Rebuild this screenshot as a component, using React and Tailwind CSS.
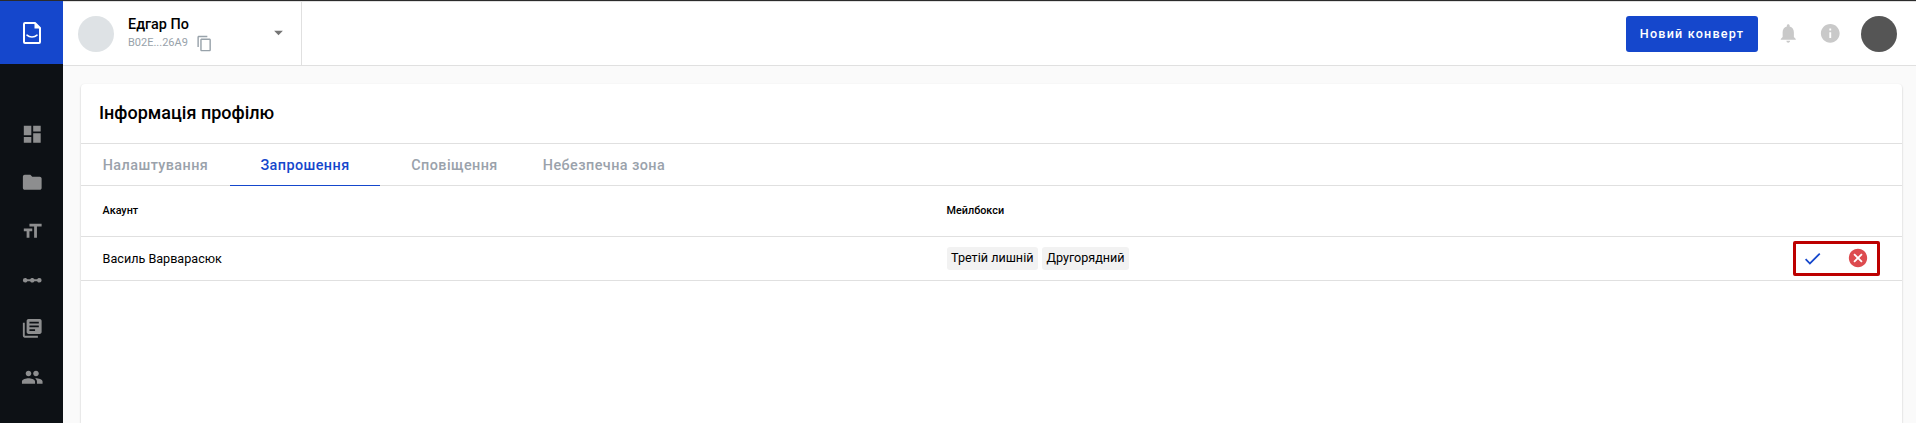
import {
  MdDashboard, MdFolder, MdFormatSize, MdLinearScale, MdLibraryBooks, MdPeople,
  MdNotifications, MdInfo, MdCancel, MdCheck, MdContentCopy, MdArrowDropDown,
} from "react-icons/md";

const navItems = [MdDashboard, MdFolder, MdFormatSize, MdLinearScale, MdLibraryBooks, MdPeople];

function Logo() {
  return (
    <svg width="20" height="24" viewBox="0 0 20 24" fill="none" stroke="#fff" strokeWidth="2" className="ml-px">
      <path d="M3 2h10l5 5v14a1 1 0 0 1-1 1H3a1 1 0 0 1-1-1V3a1 1 0 0 1 1-1z" strokeLinejoin="round" />
      <path d="M12.500 2v5.500H18z" fill="#fff" stroke="none" />
      <path d="M5 14.200c2.600 2.300 7.400 2.300 10 0" strokeWidth="1.600" strokeLinecap="round" />
    </svg>
  );
}

function Sidebar() {
  return (
    <aside className="flex w-[63px] shrink-0 flex-col bg-[#0d1115]">
      <div className="flex h-[63px] items-center justify-center bg-[#1547cc]">
        <Logo />
      </div>
      <nav className="flex flex-col items-center gap-[26.2px] pt-[58.5px] pl-[2px] text-[#8d8e8f]">
        {navItems.map((Icon, i) => (
          <Icon key={i} className="size-[22.5px]" />
        ))}
      </nav>
    </aside>
  );
}

function Header() {
  return (
    <header className="flex h-[65px] items-stretch border-t border-b border-[#e0e0e0] bg-white">
      <div className="flex w-[239px] items-center border-r border-[#e0e0e0] pl-[15px]">
        <div className="size-9 rounded-full bg-[#dee2e5]" />
        <div className="ml-[14px] flex flex-col">
          <div className="text-[14.4px] leading-[18px] font-medium">Едгар По</div>
          <div className="flex h-[18px] items-center text-[11px] text-[#98a2aa]">
            <span className="pt-[2px]">B02E...26A9</span>
            <MdContentCopy className="mt-px ml-[8px] size-[17px]" />
          </div>
        </div>
        <MdArrowDropDown className="mr-[12px] mb-[2px] ml-auto size-[21px] text-[#757575]" />
      </div>
      <div className="ml-auto flex items-center pr-[19px]">
        <button className="h-9 w-[132px] rounded-[3px] bg-[#1547cc] pt-px text-[12.6px] font-medium tracking-[1.2px] text-white">
          Новий конверт
        </button>
        <MdNotifications className="ml-[19px] size-[22.5px] text-[#c9c9c9]" />
        <MdInfo className="ml-[19px] size-[22.5px] text-[#c9c9c9]" />
        <div className="ml-[20px] size-9 rounded-full bg-[#555]" />
      </div>
    </header>
  );
}

function Chip({ children }) {
  return <span className="flex h-[23px] items-center rounded-[3px] bg-[#f2f2f2] px-[4.5px] pb-px">{children}</span>;
}

export default function App() {
  return (
    <div className="flex h-[423px] flex-col overflow-hidden bg-[#fafafa] font-[Roboto,sans-serif] text-black">
      <div className="h-px shrink-0 bg-[#2b2b2b]" />
      <div className="flex min-h-0 grow">
        <Sidebar />
        <div className="flex min-w-0 grow flex-col">
          <Header />
          <main className="mt-[18px] mr-[14px] ml-[18px] grow rounded-t bg-white shadow-[0_1px_2px_rgba(0,0,0,0.25)]">
            <h1 className="flex h-[60px] items-center border-b border-[#e0e0e0] pb-[3px] pl-[18px] text-[18px] font-medium">
              Інформація профілю
            </h1>
            <div className="flex h-[42px] border-b border-[#e0e0e0] text-center text-[14.4px] leading-[43px] font-medium tracking-[0.43px] text-[#9aa2ab]">
              <div className="w-[149px]">Налаштування</div>
              <div className="h-[42px] w-[150px] border-b border-[#1547cc] text-[#1547cc]">Запрошення</div>
              <div className="w-[149px]">Сповіщення</div>
              <div className="w-[150px]">Небезпечна зона</div>
            </div>
            <div className="flex h-[51px] items-center border-b border-[#e0e0e0] pl-[21.6px] text-[10.8px] font-medium">
              <div className="w-[844px]">Акаунт</div>
              <div>Мейлбокси</div>
            </div>
            <div className="flex h-[44px] items-center border-b border-[#e0e0e0] pr-[22.5px] pl-[21.6px] text-[12.6px]">
              <div className="w-[844px] pt-px">Василь Варварасюк</div>
              <div className="flex gap-1">
                <Chip>Третій лишній</Chip>
                <Chip>Другорядний</Chip>
              </div>
              <div className="mb-px ml-auto flex h-[35px] w-[87px] items-center justify-between rounded-[2px] border-[3px] border-[#bd0000] pr-[8px] pl-[6.5px]">
                <MdCheck className="size-[21px] text-[#1547cc]" />
                <MdCancel className="size-[22px] text-[#dd4b4f]" />
              </div>
            </div>
          </main>
        </div>
      </div>
    </div>
  );
}
